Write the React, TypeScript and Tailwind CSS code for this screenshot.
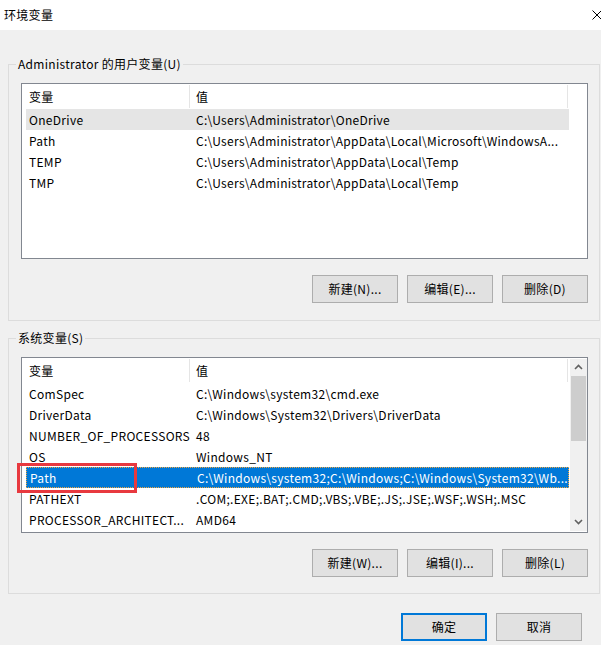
type EnvVar = {
  name: string;
  value: string;
  state?: "selected" | "focused";
};

const userVars: EnvVar[] = [
  { name: "OneDrive", value: "C:\\Users\\Administrator\\OneDrive", state: "selected" },
  { name: "Path", value: "C:\\Users\\Administrator\\AppData\\Local\\Microsoft\\WindowsA..." },
  { name: "TEMP", value: "C:\\Users\\Administrator\\AppData\\Local\\Temp" },
  { name: "TMP", value: "C:\\Users\\Administrator\\AppData\\Local\\Temp" },
];

const systemVars: EnvVar[] = [
  { name: "ComSpec", value: "C:\\Windows\\system32\\cmd.exe" },
  { name: "DriverData", value: "C:\\Windows\\System32\\Drivers\\DriverData" },
  { name: "NUMBER_OF_PROCESSORS", value: "48" },
  { name: "OS", value: "Windows_NT" },
  {
    name: "Path",
    value: "C:\\Windows\\system32;C:\\Windows;C:\\Windows\\System32\\Wb...",
    state: "focused",
  },
  { name: "PATHEXT", value: ".COM;.EXE;.BAT;.CMD;.VBS;.VBE;.JS;.JSE;.WSF;.WSH;.MSC" },
  { name: "PROCESSOR_ARCHITECT...", value: "AMD64" },
];

const WinButton = ({ label, isDefault }: { label: string; isDefault?: boolean }) => {
  let className = "w-[86px] h-[28px] bg-[#e1e1e1] flex items-center justify-center text-[12px] text-black";
  className += isDefault ? " border-2 border-[#0078d7]" : " border border-[#adadad]";
  return <div className={className}>{label}</div>;
};

const Chevron = ({ up }: { up?: boolean }) => (
  <svg width="9" height="6" viewBox="0 0 9 6" className="block">
    <path
      d={up ? "M1 5 L4.5 1.5 L8 5" : "M1 1 L4.5 4.5 L8 1"}
      fill="none"
      stroke="#606060"
      strokeWidth="1.6"
    />
  </svg>
);

const ListView = ({ rows, scrollbar }: { rows: EnvVar[]; scrollbar?: boolean }) => {
  return (
    <div className="w-[567px] h-[176px] border border-[#828790] bg-white flex">
      <div className="w-[547px] pl-[4px]">
        <div className="h-[25px] flex items-center">
          <div className="w-[164px] h-[23px] pl-[3px] flex items-center border-r border-[#e5e5e5]">
            变量
          </div>
          <div className="w-[378px] h-[23px] pl-[6px] flex items-center border-r border-[#e5e5e5]">
            值
          </div>
        </div>
        {rows.map((row) => {
          let className = "h-[21px] flex items-center whitespace-nowrap";
          if (row.state === "selected") className += " bg-[#e5e5e5]";
          if (row.state === "focused")
            className += " bg-[#0078d7] text-white border border-dotted border-[#f0a640]";
          return (
            <div key={row.name} className={className}>
              <div className="w-[164px] pl-[3px] overflow-hidden">{row.name}</div>
              <div className="pl-[6px] overflow-hidden">{row.value}</div>
            </div>
          );
        })}
      </div>
      {scrollbar && (
        <div className="w-[17px] ml-auto mt-[1px] mb-[1px] bg-[#f0f0f0] flex flex-col items-center">
          <div className="h-[16px] flex items-center justify-center">
            <Chevron up />
          </div>
          <div className="w-[15px] h-[65px] bg-[#cdcdcd] mt-[1px]"></div>
          <div className="flex-1"></div>
          <div className="h-[18px] flex items-center justify-center">
            <Chevron />
          </div>
        </div>
      )}
    </div>
  );
};

const GroupBox = ({
  title,
  rows,
  scrollbar,
  buttons,
  height,
}: {
  title: string;
  rows: EnvVar[];
  scrollbar?: boolean;
  buttons: string[];
  height: string;
}) => (
  <div className={`relative ml-[8px] w-[592px] ${height} border border-[#dcdcdc] pt-[18px] pl-[12px]`}>
    <span className="absolute -top-[9px] left-[7px] px-[2px] bg-[#f0f0f0] leading-[16px]">
      {title}
    </span>
    <ListView rows={rows} scrollbar={scrollbar} />
    <div className="flex justify-end gap-[9px] w-[567px] mt-[16px]">
      {buttons.map((b) => (
        <WinButton key={b} label={b} />
      ))}
    </div>
  </div>
);

export default function App() {
  return (
    <div
      className="relative w-[601px] h-[645px] bg-[#f0f0f0] text-[12px] tracking-[0.3px] text-black overflow-hidden"
      style={{ fontFamily: '"Noto Sans CJK SC", "Noto Sans", sans-serif' }}
    >
      <div className="h-[30px] bg-white flex items-center pl-[4px] relative">
        <span className="text-[12px]">环境变量</span>
        <svg width="10" height="10" viewBox="0 0 10 10" className="absolute left-[592px] top-[10px]">
          <path d="M0.5 0.5 L9.5 9.5 M9.5 0.5 L0.5 9.5" stroke="#000" strokeWidth="1" />
        </svg>
      </div>

      <div className="pt-[34px]">
        <GroupBox
          title="Administrator 的用户变量(U)"
          rows={userVars}
          buttons={["新建(N)...", "编辑(E)...", "删除(D)"]}
          height="h-[257px]"
        />
        <div className="h-[17px]"></div>
        <GroupBox
          title="系统变量(S)"
          rows={systemVars}
          scrollbar
          buttons={["新建(W)...", "编辑(I)...", "删除(L)"]}
          height="h-[256px]"
        />
        <div className="flex justify-end gap-[9px] w-[582px] mt-[19px]">
          <WinButton label="确定" isDefault />
          <WinButton label="取消" />
        </div>
      </div>

      {/* red annotation around Path */}
      <div className="absolute left-[17px] top-[463px] w-[120px] h-[30px] border-[3px] border-[#e8393f]"></div>
    </div>
  );
}
